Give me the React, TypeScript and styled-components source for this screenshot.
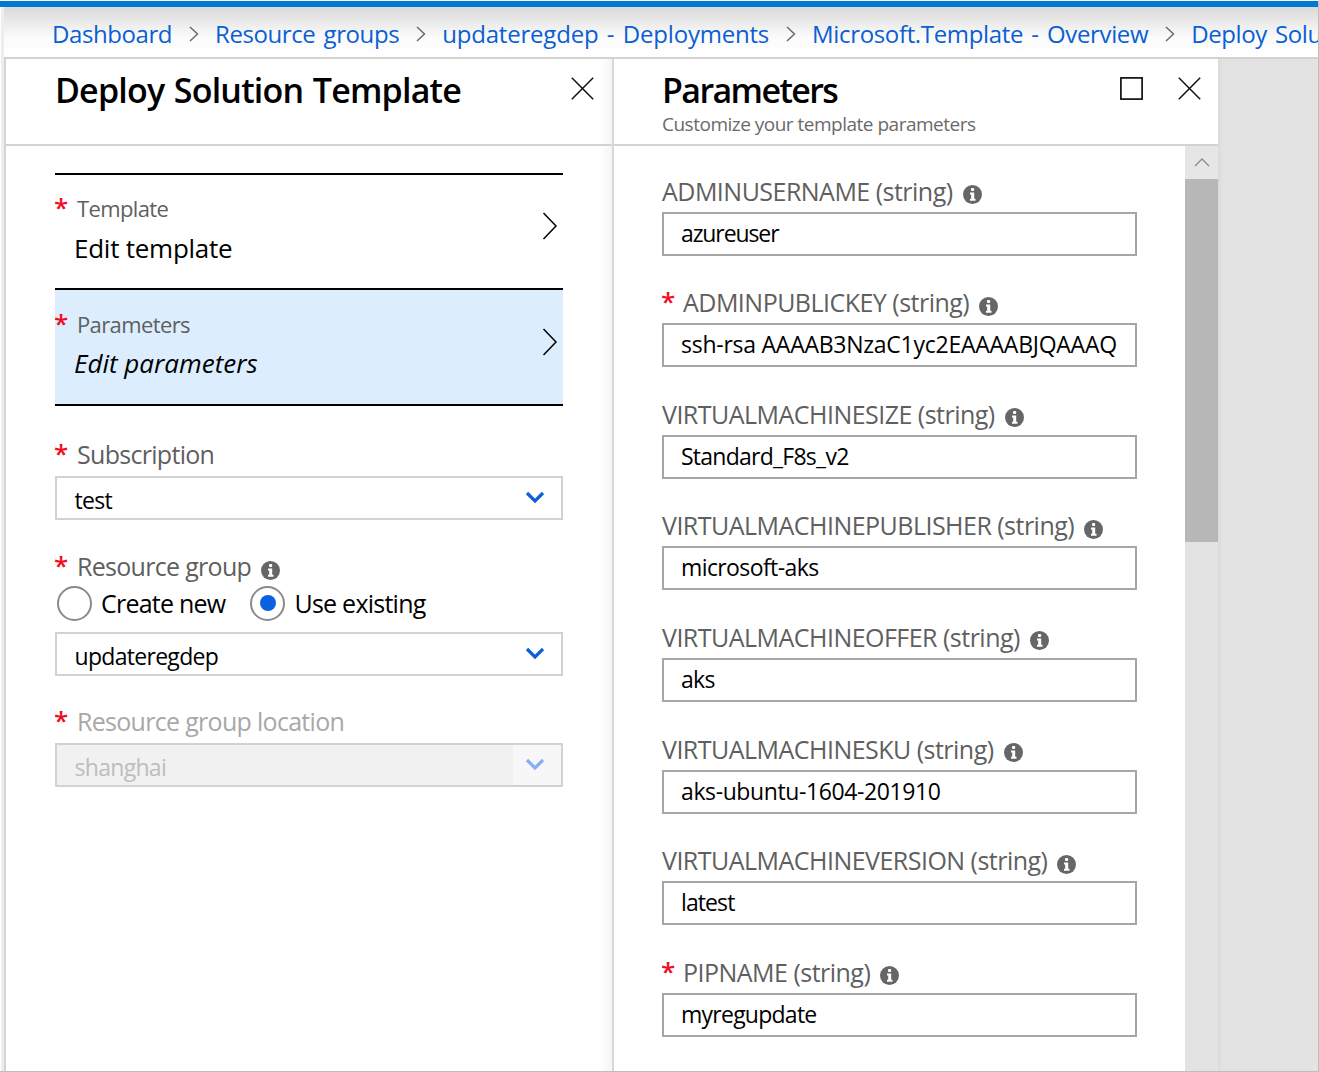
import React from "react";
import styled, { createGlobalStyle } from "styled-components";

const Global = createGlobalStyle`
  html, body { margin: 0; padding: 0; background: #fff; }
  body { font-family: "Open Sans", "Noto Sans", "Liberation Sans", sans-serif; }
  * { box-sizing: border-box; }
`;

const Page = styled.div`
  width: 1319px; height: 1072px; overflow: hidden; display: flex; flex-direction: column;
  background: #e3e3e3; border-top: 1px solid #fff; border-right: 1px solid #bdbdbd; border-bottom: 1px solid #bdbdbd;
`;
const TopBar = styled.div`height: 6px; background: #0078d4; flex: none;`;
const Shell = styled.div`flex: 1; min-height: 0; display: flex;`;
const Strip = styled.div`width: 4px; flex: none; background: #ededed; border-left: 1px solid #fff;`;
const Column = styled.div`flex: 1; min-width: 0; display: flex; flex-direction: column;`;
const Crumbs = styled.nav`
  height: 50px; flex: none; display: flex; align-items: center; padding: 3px 0 0 48px; overflow: hidden; white-space: nowrap;
  background: linear-gradient(#d9d9d9 0, #fbfbfb 30px, #fff 100%);
`;
const Crumb = styled.span<{ $ls: number }>`font-size: 24px; letter-spacing: ${p => p.$ls}px; word-spacing: 2.4px; color: #0b5fd3; flex: none;`;
const CrumbSep = styled.svg`width: 12px; height: 20px; margin: 0 15px 0 16px; flex: none;`;
const Main = styled.div`
  flex: 1; min-height: 0; display: flex; border-top: 2px solid #d2d2d2;
`;
const LeftEdge = styled.div`width: 2px; flex: none; background: #d4d4d4;`;
const Blade = styled.section<{ $w: number; $shade?: boolean }>`
  width: ${p => p.$w}px; flex: none; display: flex; flex-direction: column; min-height: 0;
  background: ${p => (p.$shade ? "linear-gradient(90deg, #fff calc(100% - 12px), #f5f5f5 100%)" : "#fff")};
`;
const BladeHead = styled.header`
  height: 87px; flex: none; border-bottom: 2px solid #d2d2d2; display: flex; justify-content: space-between; align-items: flex-start;
`;
const TitleBox = styled.div<{ $pad: number }>`padding: 6px 0 0 ${p => p.$pad}px;`;
const Title = styled.h1<{ $ls: number; $ws?: number }>`
  margin: 0; font-size: 34px; line-height: 50px; font-weight: 600; color: #000;
  letter-spacing: ${p => p.$ls}px; word-spacing: ${p => p.$ws ?? 0}px;
`;
const Sub = styled.div`font-size: 19px; line-height: 24px; margin-top: -3px; color: #6a6a6a; letter-spacing: -0.5px;`;
const HeadIcons = styled.div<{ $right: number }>`display: flex; gap: 35px; padding: 18px ${p => p.$right}px 0 0;`;
const HeadIcon = styled.svg`width: 23px; height: 23px; display: block;`;
const Divider = styled.div`width: 2px; flex: none; background: #d8d8d8;`;
const LeftBody = styled.div`
  flex: 1; padding: 27px 49px 0 49px; display: flex; flex-direction: column;
`;
const PickRow = styled.div<{ $active?: boolean; $h: number }>`
  height: ${p => p.$h}px; border-top: 2px solid #000; background: ${p => (p.$active ? "#dceefe" : "#fff")};
  display: flex; justify-content: space-between; align-items: flex-start;
`;
const EndRule = styled.div`height: 2px; background: #000; flex: none;`;
const PickText = styled.div<{ $top: number }>`padding-top: ${p => p.$top}px;`;
const LabelLine = styled.div<{ $dim?: boolean; $size?: number; $ls?: number }>`
  display: flex; align-items: center; gap: 10px;
  font-size: ${p => p.$size ?? 25}px; line-height: 34px; letter-spacing: ${p => p.$ls ?? -0.7}px;
  color: ${p => (p.$dim ? "#a8a8a8" : "#5f5f5f")}; white-space: nowrap;
`;
const Star = styled.span<{ $tight?: boolean }>`
  color: #ef0f23; font-size: 26px; font-weight: 600; width: 12px; flex: none; position: relative; top: -1px; left: -1px; letter-spacing: 0;
  margin-right: ${p => (p.$tight ? -1 : 0)}px;
`;
const PickValue = styled.div<{ $italic?: boolean }>`
  font-size: 26px; line-height: 36px; color: #000; padding-left: 19px;
  letter-spacing: ${p => (p.$italic ? 0 : -0.25)}px; margin-top: ${p => (p.$italic ? 4 : 5)}px;
  font-style: ${p => (p.$italic ? "italic" : "normal")};
`;
const Chevron = styled.svg<{ $top: number }>`width: 18px; height: 30px; margin: ${p => p.$top}px 4px 0 0; flex: none;`;
const Group = styled.div<{ $top: number }>`margin-top: ${p => p.$top}px;`;
const Select = styled.div<{ $disabled?: boolean; $top?: number }>`
  height: 44px; border: 2px solid #d2d2d2; display: flex; align-items: stretch; margin-top: ${p => p.$top ?? 0}px;
  background: ${p => (p.$disabled ? "#f1f1f1" : "#fff")}; color: ${p => (p.$disabled ? "#bdbdbd" : "#000")};
  font-size: 23px; letter-spacing: -0.7px;
`;
const SelectValue = styled.div`flex: 1; padding: 2px 0 0 17.5px; line-height: 40px;`;
const SelectArrow = styled.div<{ $disabled?: boolean }>`
  width: 48px; flex: none; display: flex; align-items: center; justify-content: center; padding: 0 4px 2px 0;
  background: ${p => (p.$disabled ? "#f7f7f7" : "transparent")};
`;
const RadioLine = styled.div`display: flex; align-items: center; height: 40px; padding-left: 2px;`;
const Radio = styled.span<{ $on?: boolean }>`
  width: 35px; height: 35px; border-radius: 50%; border: 2px solid #8a8a8a; flex: none; display: flex; align-items: center; justify-content: center;
  &::after { content: ""; width: 16px; height: 16px; border-radius: 50%; background: ${p => (p.$on ? "#0b62e0" : "transparent")}; }
`;
const RadioText = styled.span<{ $gap: number }>`
  font-size: 25px; letter-spacing: -0.76px; color: #000; margin: 0 ${p => p.$gap}px 0 9px;
`;
const RightScroll = styled.div`flex: 1; display: flex; min-height: 0;`;
const Params = styled.div`flex: 1; padding: 26.6px 48px 0 48px; overflow: hidden;`;
const Field = styled.div`height: 111.6px; padding-top: 1px;`;
const Input = styled.div<{ $ls: number }>`
  height: 44px; border: 2px solid #a6a6a6; margin-top: 4px; padding-left: 17px; font-size: 23px; line-height: 39.5px; color: #000;
  letter-spacing: ${p => p.$ls}px; white-space: nowrap; overflow: hidden;
`;
const Track = styled.div`width: 33px; flex: none; background: #e3e3e3; display: flex; flex-direction: column;`;
const ScrollUp = styled.div`height: 33px; flex: none; background: #e6e6e6; display: flex; align-items: center; justify-content: center; padding-bottom: 2px;`;
const Thumb = styled.div`height: 363px; flex: none; background: #b7b7b7;`;
const TrackRest = styled.div`flex: 1; background: #e3e3e3;`;
const Backdrop = styled.div`
  flex: 1; background: linear-gradient(90deg, #dadada 0, #e3e3e3 5px);
`;
const Info = styled.svg`width: 19px; height: 19px; flex: none; position: relative; top: 4px;`;

const InfoIcon = () => (
  <Info viewBox="0 0 19 19">
    <circle cx="9.5" cy="9.5" r="9.5" fill="#666" />
    <rect x="8" y="3" width="3.2" height="3" rx="1" fill="#fff" />
    <path d="M7 7.5h4.2v6.3h1.3v2H7v-2h1.2v-4.3H7z" fill="#fff" />
  </Info>
);
const Close = () => (
  <HeadIcon viewBox="0 0 23 23"><path d="M.8.8 22.2 22.2M22.2.8.8 22.2" stroke="#111" strokeWidth="1.5" fill="none" /></HeadIcon>
);
const Maximize = () => (
  <HeadIcon viewBox="0 0 23 23"><rect x=".9" y=".9" width="21.2" height="21.2" stroke="#111" strokeWidth="1.7" fill="none" /></HeadIcon>
);
const RightChevron = ({ top }: { top: number }) => (
  <Chevron $top={top} viewBox="0 0 18 30"><path d="M2.5 2 15 15 2.5 28" stroke="#000" strokeWidth="1.5" fill="none" /></Chevron>
);
const BlueArrow = ({ dim }: { dim?: boolean }) => (
  <svg width="20" height="14" viewBox="0 0 20 14">
    <path d="M2 3 10 11 18 3" stroke={dim ? "#86aef0" : "#0b5fd8"} strokeWidth="3.2" fill="none" />
  </svg>
);

const crumbs = [
  { text: "Dashboard", ls: -0.42 },
  { text: "Resource groups", ls: -0.42 },
  { text: "updateregdep - Deployments", ls: -0.2 },
  { text: "Microsoft.Template - Overview", ls: -0.35 },
  { text: "Deploy Solution Template", ls: -0.42 },
];
const fields = [
  { name: "ADMINUSERNAME (string)", value: "azureuser", ls: -1.1 },
  { name: "ADMINPUBLICKEY (string)", value: "ssh-rsa AAAAB3NzaC1yc2EAAAABJQAAAQ", req: true, ls: -0.25 },
  { name: "VIRTUALMACHINESIZE (string)", value: "Standard_F8s_v2", ls: -0.75 },
  { name: "VIRTUALMACHINEPUBLISHER (string)", value: "microsoft-aks", ls: -0.6 },
  { name: "VIRTUALMACHINEOFFER (string)", value: "aks", ls: -0.7 },
  { name: "VIRTUALMACHINESKU (string)", value: "aks-ubuntu-1604-201910", ls: -0.4 },
  { name: "VIRTUALMACHINEVERSION (string)", value: "latest", ls: -0.9 },
  { name: "PIPNAME (string)", value: "myregupdate", req: true, ls: -0.75 },
];

export default function App() {
  return (
    <Page>
      <Global />
      <TopBar />
      <Shell>
        <Strip />
        <Column>
          <Crumbs>
            {crumbs.map((c, i) => (
              <React.Fragment key={c.text}>
                <Crumb $ls={c.ls}>{c.text}</Crumb>
                {i < crumbs.length - 1 && (
                  <CrumbSep viewBox="0 0 12 20"><path d="M2 3 9.5 10 2 17" stroke="#666" strokeWidth="1.4" fill="none" /></CrumbSep>
                )}
              </React.Fragment>
            ))}
          </Crumbs>
          <Main>
            <LeftEdge />
            <Blade $w={606} $shade>
              <BladeHead>
                <TitleBox $pad={49}><Title $ls={-0.8} $ws={1.5}>Deploy Solution Template</Title></TitleBox>
                <HeadIcons $right={18}><Close /></HeadIcons>
              </BladeHead>
              <LeftBody>
                <PickRow $h={115}>
                  <PickText $top={16}>
                    <LabelLine $size={22} $ls={-0.62}><Star>*</Star>Template</LabelLine>
                    <PickValue>Edit template</PickValue>
                  </PickText>
                  <RightChevron top={36} />
                </PickRow>
                <PickRow $h={116} $active>
                  <PickText $top={17}>
                    <LabelLine $size={22} $ls={-0.62}><Star>*</Star>Parameters</LabelLine>
                    <PickValue $italic>Edit parameters</PickValue>
                  </PickText>
                  <RightChevron top={37} />
                </PickRow>
                <EndRule />
                <Group $top={31}>
                  <LabelLine><Star>*</Star>Subscription</LabelLine>
                  <Select $top={5}><SelectValue>test</SelectValue><SelectArrow><BlueArrow /></SelectArrow></Select>
                </Group>
                <Group $top={29}>
                  <LabelLine><Star>*</Star>Resource group <InfoIcon /></LabelLine>
                  <RadioLine>
                    <Radio /><RadioText $gap={25}>Create new</RadioText>
                    <Radio $on /><RadioText $gap={0}>Use existing</RadioText>
                  </RadioLine>
                  <Select $top={9}><SelectValue>updateregdep</SelectValue><SelectArrow><BlueArrow /></SelectArrow></Select>
                </Group>
                <Group $top={28}>
                  <LabelLine $dim><Star>*</Star>Resource group location</LabelLine>
                  <Select $disabled $top={5}><SelectValue>shanghai</SelectValue><SelectArrow $disabled><BlueArrow dim /></SelectArrow></Select>
                </Group>
              </LeftBody>
            </Blade>
            <Divider />
            <Blade $w={604}>
              <BladeHead>
                <TitleBox $pad={48}>
                  <Title $ls={-1.6}>Parameters</Title>
                  <Sub>Customize your template parameters</Sub>
                </TitleBox>
                <HeadIcons $right={17}><Maximize /><Close /></HeadIcons>
              </BladeHead>
              <RightScroll>
                <Params>
                  {fields.map(f => (
                    <Field key={f.name}>
                      <LabelLine $ls={-0.52}>
                        {f.req && <Star $tight>*</Star>}
                        {f.name}
                        <InfoIcon />
                      </LabelLine>
                      <Input $ls={f.ls}>{f.value}</Input>
                    </Field>
                  ))}
                </Params>
                <Track>
                  <ScrollUp>
                    <svg width="18" height="10" viewBox="0 0 18 10"><path d="M2 9 9 2 16 9" stroke="#8c8c8c" strokeWidth="1.3" fill="none" /></svg>
                  </ScrollUp>
                  <Thumb />
                  <TrackRest />
                </Track>
              </RightScroll>
            </Blade>
            <Backdrop />
          </Main>
        </Column>
      </Shell>
    </Page>
  );
}
